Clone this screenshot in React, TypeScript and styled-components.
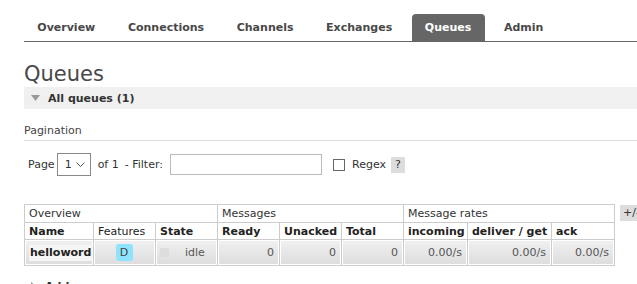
// Imports
import styled, { createGlobalStyle } from "styled-components";

const GlobalStyle = createGlobalStyle`
  html, body {
    margin: 0;
    padding: 0;
    background: #fff;
    overflow: hidden;
  }

  body {
    font-family: "DejaVu Sans", Verdana, sans-serif;
    font-size: 11px;
    color: #484848;
  }
`;

const Page = styled.div`
  padding-left: 24px;
`;

/*******************/
/*      Tabs       */
/*******************/

const TabBar = styled.ul`
  display: flex;
  gap: 6px;
  list-style: none;
  margin: 0;
  padding: 14px 0 0;
  border-bottom: 1px solid #666;
`;

const Tab = styled.li<{ $active?: boolean }>`
  height: 27px;
  line-height: 27px;
  padding: 0 13.3px;
  font-weight: bold;
  color: ${(p) => (p.$active ? "#fff" : "#484848")};
  background: ${(p) => (p.$active ? "#666" : "transparent")};
  border-radius: 4px 4px 0 0;
`;

/*******************/
/*    Headings     */
/*******************/

const Title = styled.h1`
  margin: 20px 0 1px;
  font-size: 21px;
  line-height: 24px;
  font-weight: normal;
  color: #484848;
`;

const SectionBar = styled.div<{ $filled?: boolean }>`
  display: flex;
  align-items: center;
  gap: 8px;
  height: 22px;
  padding-left: 7px;
  background: ${(p) => (p.$filled ? "#f0f0f0" : "transparent")};
  font-weight: bold;
  color: #333;
`;

const SubTitle = styled.div`
  margin-top: 13px;
  height: 18px;
  line-height: 18px;
  border-bottom: 1px solid #ddd;
  color: #444;
`;

/*******************/
/*     Filter      */
/*******************/

const FilterRow = styled.div`
  display: flex;
  align-items: center;
  margin-top: 12px;
  padding-left: 4px;
  height: 23px;
  color: #333;
`;

const Label = styled.span<{ $ml?: number }>`
  margin-left: ${(p) => p.$ml ?? 0}px;
`;

const FakeSelect = styled.div`
  display: flex;
  align-items: center;
  justify-content: space-between;
  box-sizing: border-box;
  width: 34px;
  height: 23px;
  margin-left: 2px;
  padding: 0 5px 0 7px;
  border: 1px solid #888;
  background: #fff;
`;

const TextInput = styled.div`
  box-sizing: border-box;
  width: 152px;
  height: 21px;
  margin-left: 7px;
  border: 1px solid #bbb;
  background: #fff;
`;

const CheckBox = styled.div`
  box-sizing: border-box;
  width: 12px;
  height: 12px;
  margin-left: 11px;
  border: 1px solid #666;
  background: #fff;
`;

const Help = styled.span`
  margin-left: 5px;
  width: 14px;
  height: 16px;
  line-height: 16px;
  text-align: center;
  background: #ddd;
  color: #333;
`;

/*******************/
/*      Table      */
/*******************/

const TableRow = styled.div`
  display: flex;
  align-items: flex-start;
  gap: 5px;
  margin-top: 28px;
`;

const Table = styled.table`
  border-collapse: collapse;
  table-layout: fixed;
  width: 590px;
  border: 1px solid #ccc;
`;

const Col = styled.col<{ $w: number }>`
  width: ${(p) => p.$w}px;
`;

const GroupHead = styled.th`
  height: 17px;
  padding: 0 4px;
  border: 1px solid #ccc;
  text-align: left;
  font-weight: normal;
  color: #333;
`;

const ColHead = styled.th<{ $light?: boolean }>`
  height: 16px;
  padding: 0 4px;
  border: 1px solid #ccc;
  text-align: left;
  font-weight: ${(p) => (p.$light ? "normal" : "bold")};
  color: #222;
  white-space: nowrap;
`;

const Cell = styled.td<{ $align?: "left" | "center" | "right" }>`
  height: 25px;
  padding: 0 5px 0 4px;
  border: 1px solid #ccc;
  box-shadow: inset 0 0 0 1px #fff;
  background: linear-gradient(#f0f0f0, #dcdcdc);
  text-align: ${(p) => p.$align ?? "right"};
  vertical-align: middle;
  color: #555;
  white-space: nowrap;
`;

const QueueName = styled.span`
  display: inline-block;
  padding: 1px 2px 2px 1px;
  background: #f6f6f6;
  font-weight: bold;
  color: #222;
`;

const Badge = styled.span`
  display: inline-block;
  width: 17px;
  height: 17px;
  line-height: 17px;
  border-radius: 3px;
  background: #8ee4ff;
  color: #444;
  text-align: center;
`;

const StateBox = styled.div`
  display: flex;
  align-items: center;
  gap: 16px;
`;

const StateDot = styled.span`
  width: 9px;
  height: 9px;
  background: #ddd;
`;

const ToggleButton = styled.div`
  height: 16px;
  line-height: 16px;
  margin-top: 1px;
  padding: 0 3px;
  background: #ddd;
  color: #333;
  white-space: nowrap;
`;

const BottomSection = styled(SectionBar)`
  margin-top: 9px;
`;

const Triangle = ({ open }: { open: boolean }) =>
  open ? (
    <svg width="9" height="6" viewBox="0 0 9 6">
      <polygon points="0,0 9,0 4.5,6" fill="#999" />
    </svg>
  ) : (
    <svg width="6" height="9" viewBox="0 0 6 9">
      <polygon points="0,0 6,4.5 0,9" fill="#999" />
    </svg>
  );

const Chevron = () => (
  <svg width="9" height="6" viewBox="0 0 9 6">
    <polyline points="0.5,0.5 4.5,4.5 8.5,0.5" fill="none" stroke="#555" strokeWidth="1" />
  </svg>
);

const tabs = ["Overview", "Connections", "Channels", "Exchanges", "Queues", "Admin"];

const App = () => {
  return (
    <Page>
      <GlobalStyle />

      {/* Navigation */}
      <TabBar>
        {tabs.map((t) => (
          <Tab key={t} $active={t === "Queues"}>
            {t}
          </Tab>
        ))}
      </TabBar>

      <Title>Queues</Title>

      <SectionBar $filled>
        <Triangle open />
        <span>All queues (1)</span>
      </SectionBar>

      {/* Pagination */}
      <SubTitle>Pagination</SubTitle>
      <FilterRow>
        <Label>Page</Label>
        <FakeSelect>
          <span>1</span>
          <Chevron />
        </FakeSelect>
        <Label $ml={7}>of 1</Label>
        <Label $ml={6}>- Filter:</Label>
        <TextInput />
        <CheckBox />
        <Label $ml={7}>Regex</Label>
        <Help>?</Help>
      </FilterRow>

      {/* Queue table */}
      <TableRow>
        <Table>
          <colgroup>
            <Col $w={69} />
            <Col $w={62} />
            <Col $w={62} />
            <Col $w={62} />
            <Col $w={62} />
            <Col $w={62} />
            <Col $w={64} />
            <Col $w={84} />
            <Col $w={63} />
          </colgroup>
          <thead>
            <tr>
              <GroupHead colSpan={3}>Overview</GroupHead>
              <GroupHead colSpan={3}>Messages</GroupHead>
              <GroupHead colSpan={3}>Message rates</GroupHead>
            </tr>
            <tr>
              <ColHead>Name</ColHead>
              <ColHead $light>Features</ColHead>
              <ColHead>State</ColHead>
              <ColHead>Ready</ColHead>
              <ColHead>Unacked</ColHead>
              <ColHead>Total</ColHead>
              <ColHead>incoming</ColHead>
              <ColHead>deliver / get</ColHead>
              <ColHead>ack</ColHead>
            </tr>
          </thead>
          <tbody>
            <tr>
              <Cell $align="left">
                <QueueName>helloword</QueueName>
              </Cell>
              <Cell $align="center">
                <Badge>D</Badge>
              </Cell>
              <Cell $align="left">
                <StateBox>
                  <StateDot />
                  <span>idle</span>
                </StateBox>
              </Cell>
              <Cell>0</Cell>
              <Cell>0</Cell>
              <Cell>0</Cell>
              <Cell>0.00/s</Cell>
              <Cell>0.00/s</Cell>
              <Cell>0.00/s</Cell>
            </tr>
          </tbody>
        </Table>
        <ToggleButton>+/-</ToggleButton>
      </TableRow>

      <BottomSection>
        <Triangle open={false} />
        <span>Add a new queue</span>
      </BottomSection>
    </Page>
  );
};

export default App;
